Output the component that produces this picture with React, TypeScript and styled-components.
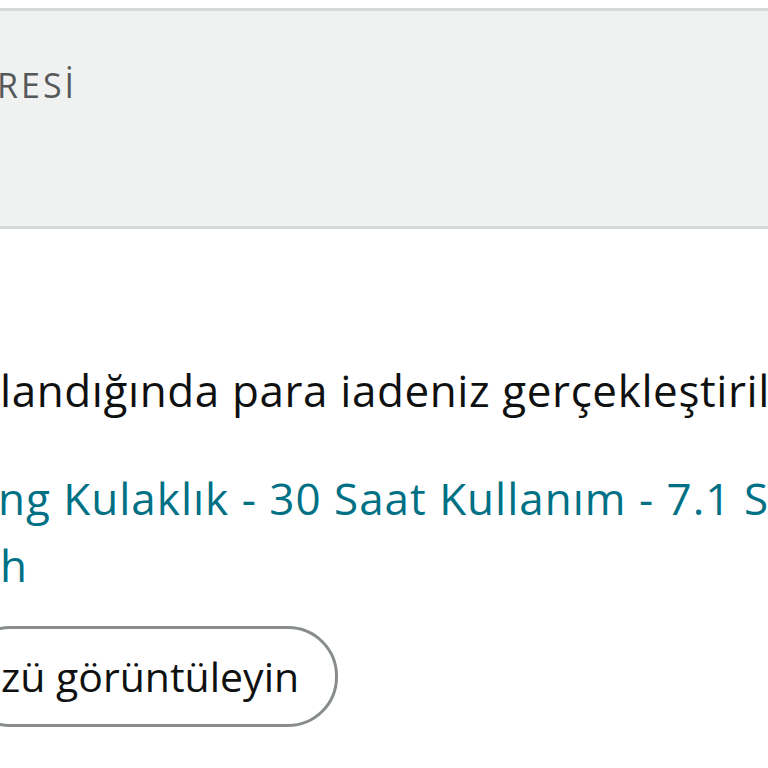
import React from "react";
import styled, { createGlobalStyle } from "styled-components";

const Global = createGlobalStyle`
  html, body { margin: 0; padding: 0; background: #ffffff; overflow: hidden; }
  body { font-family: "Open Sans", "Noto Sans", Arial, sans-serif; color: #0f1111; }
`;

const Page = styled.div`
  width: 768px;
  height: 768px;
  overflow: hidden;
  padding-top: 8px;
  box-sizing: border-box;
`;

const HeaderPanel = styled.div`
  background: #f0f2f2;
  border-top: 3px solid #d5d9d9;
  border-bottom: 3px solid #d5d9d9;
  padding-top: 52px;
  height: 163px;
`;

const HeaderLabel = styled.div`
  font-size: 34px;
  line-height: 44px;
  color: #565959;
  letter-spacing: 3px;
  white-space: nowrap;
  margin-left: -3px;
`;

const Body = styled.div`
  padding-top: 128px;
  display: flex;
  flex-direction: column;
  align-items: flex-start;
`;

const Line = styled.div<{ $link?: boolean; $shift?: number }>`
  font-size: 44px;
  line-height: 67px;
  letter-spacing: ${(p) => (p.$link ? 1 : 0.6)}px;
  white-space: nowrap;
  color: ${(p) => (p.$link ? "#007185" : "#0f1111")};
  margin-left: ${(p) => p.$shift ?? 0}px;
`;

const LinkBlock = styled.div`
  margin-top: 41px;
`;

const PillButton = styled.button`
  margin-top: 27px;
  margin-left: -40px;
  height: 101px;
  box-sizing: border-box;
  border: 3px solid #888c8c;
  border-radius: 50px;
  background: #ffffff;
  padding: 0 36px 0 38px;
  font-family: inherit;
  font-size: 41px;
  line-height: 95px;
  color: #0f1111;
  white-space: nowrap;
`;

export default function App() {
  return (
    <>
      <Global />
      <Page>
        <HeaderPanel>
          <HeaderLabel>RESİ</HeaderLabel>
        </HeaderPanel>
        <Body>
          <Line $shift={0}>landığında para iadeniz gerçekleştirilecektir.</Line>
          <LinkBlock>
            <Line $link $shift={-2}>ng Kulaklık - 30 Saat Kullanım - 7.1 Surround Ses</Line>
            <Line $link $shift={0}>h</Line>
          </LinkBlock>
          <PillButton>zü görüntüleyin</PillButton>
        </Body>
      </Page>
    </>
  );
}
